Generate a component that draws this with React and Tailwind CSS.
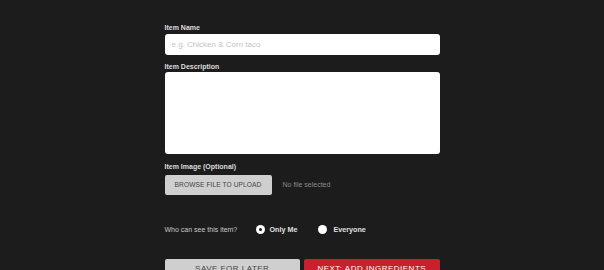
import React from 'react';

export default function App() {
  return (
    <div className="min-h-screen w-full bg-[#1c1c1c] font-['Liberation_Sans',Arial,sans-serif] overflow-hidden">
      <div className="w-[275px] mx-auto pt-[23px] flex flex-col">
        <label className="text-[7px] leading-[9px] font-bold text-[#dcdcdc]">Item Name</label>
        <input
          className="mt-[2px] h-[21px] w-full rounded-[3px] bg-white px-[7px] text-[8px] text-[#333] placeholder:text-[#c4c4c4] outline-none"
          placeholder="e.g. Chicken & Corn taco"
        />

        <label className="mt-[7px] text-[7px] leading-[9px] font-bold text-[#dcdcdc]">Item Description</label>
        <textarea className="mt-[1px] h-[82px] w-full rounded-[3px] bg-white resize-none outline-none" />

        <label className="mt-[8px] text-[7px] leading-[9px] font-bold text-[#dcdcdc]">Item Image (Optional)</label>
        <div className="mt-[4px] flex items-center">
          <button className="h-[20px] w-[107px] rounded-[2px] bg-[#cfcfcf] text-[6.6px] tracking-[0.1px] text-[#444]">
            BROWSE FILE TO UPLOAD
          </button>
          <span className="ml-[11px] text-[7px] text-[#8a8a8a]">No file selected</span>
        </div>

        <div className="mt-[29px] flex items-center h-[12px]">
          <span className="text-[7px] text-[#c8c8c8] w-[91px]">Who can see this item?</span>
          <span className="flex items-center">
            <span className="w-[9px] h-[9px] rounded-full bg-white flex items-center justify-center">
              <span className="w-[3px] h-[3px] rounded-full bg-[#1c1c1c]" />
            </span>
            <span className="ml-[5px] text-[7.2px] font-bold text-[#e0e0e0]">Only Me</span>
          </span>
          <span className="ml-[21px] flex items-center">
            <span className="w-[9px] h-[9px] rounded-full bg-white" />
            <span className="ml-[6px] text-[7.2px] font-bold text-[#e0e0e0]">Everyone</span>
          </span>
        </div>

        <div className="mt-[23px] flex gap-[4px]">
          <button className="flex-1 h-[24px] rounded-[2px] bg-[#cfcfcf] text-[8px] tracking-[0.5px] text-[#444] pt-[4px] flex justify-center items-start">
            SAVE FOR LATER
          </button>
          <button className="flex-1 h-[24px] rounded-[2px] bg-[#c8202c] text-[8px] tracking-[0.5px] text-white pt-[4px] flex justify-center items-start">
            NEXT: ADD INGREDIENTS
          </button>
        </div>
      </div>
    </div>
  );
}
